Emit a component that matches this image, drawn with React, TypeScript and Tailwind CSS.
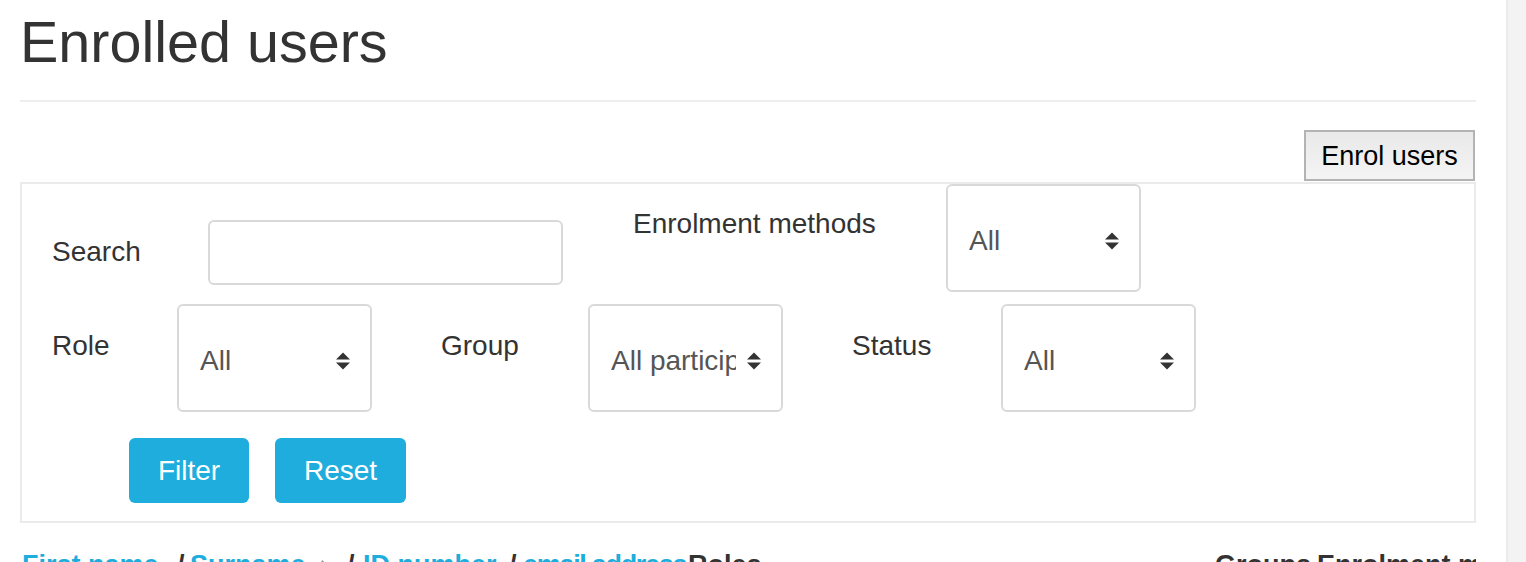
import React from 'react';

const SortArrows = () => (
  <svg width="16" height="18" viewBox="0 0 16 18" className="shrink-0">
    <polygon points="1,7.5 8,0.5 15,7.5" fill="#333" />
    <polygon points="1,10.5 15,10.5 8,17.5" fill="#333" />
  </svg>
);

function FakeSelect({ value, extra = '' }: { value: string; extra?: string }) {
  return (
    <div
      className={`${extra} w-[195px] h-[108px] shrink-0 flex items-center pt-[5px] pl-[21px] pr-[19px] border-2 border-[#d9d9d9] rounded-[6px] bg-white`}
    >
      <span className="flex-1 overflow-hidden whitespace-nowrap text-[28px] leading-[32px] text-[#555]">{value}</span>
      <span className="ml-[10px] flex items-center">
        <SortArrows />
      </span>
    </div>
  );
}

function Label({ children, cls }: { children: React.ReactNode; cls: string }) {
  return (
    <label className={`${cls} shrink-0 text-[28px] leading-[32px] text-[#333] whitespace-nowrap`}>{children}</label>
  );
}

export default function App() {
  return (
    <div className="flex h-[562px] overflow-hidden bg-white font-['Liberation_Sans',Arial,sans-serif]">
      <div className="w-[1506px] shrink-0 pl-[20px] pr-[30px]">
        <h2 className="pt-[10px] text-[57.5px] leading-[64px] text-[#333]">Enrolled users</h2>
        <div className="mt-[26px] h-[2px] bg-[#eeeeee]" />

        <div className="mt-[28px] flex justify-end pr-[1px]">
          <button className="w-[171px] h-[51px] border-2 border-[#b3b3b3] bg-gradient-to-b from-[#e9e9e9] to-[#f4f4f4] text-[27px] leading-[32px] text-black">
            Enrol users
          </button>
        </div>

        <div className="mt-[1px] border-2 border-[#ebebeb] pl-[30px] pb-[18px]">
          <div className="flex items-start">
            <Label cls="mt-[52px] w-[156px]">Search</Label>
            <input
              type="text"
              className="mt-[36px] mr-[70px] w-[355px] h-[65px] shrink-0 border-2 border-[#d9d9d9] rounded-[6px] outline-none"
            />
            <Label cls="mt-[24px] w-[313px]">Enrolment methods</Label>
            <FakeSelect value="All" />
          </div>

          <div className="mt-[12px] flex items-start">
            <Label cls="mt-[26px] w-[125px]">Role</Label>
            <FakeSelect value="All" extra="mr-[69px]" />
            <Label cls="mt-[26px] w-[147px]">Group</Label>
            <FakeSelect value="All participants" extra="mr-[69px]" />
            <Label cls="mt-[26px] w-[149px]">Status</Label>
            <FakeSelect value="All" />
          </div>

          <div className="mt-[26px] ml-[77px] flex gap-[26px]">
            <button className="w-[120px] h-[65px] rounded-[6px] bg-[#1eaddc] text-white text-[28px] leading-[32px]">
              Filter
            </button>
            <button className="w-[131px] h-[65px] rounded-[6px] bg-[#1eaddc] text-white text-[28px] leading-[32px]">
              Reset
            </button>
          </div>
        </div>

        <div className="mt-[26px] flex items-baseline overflow-hidden whitespace-nowrap text-[27px] leading-[32px] font-bold">
          <span className="ml-[2px] w-[155px] shrink-0 text-[#1eaddc]">First name</span>
          <span className="w-[13px] shrink-0 text-[#333]">/</span>
          <span className="w-[127px] shrink-0 text-[#1eaddc]">Surname</span>
          <span className="w-[30px] shrink-0 flex items-start">
            <svg width="11" height="14" viewBox="0 0 11 14" className="self-center">
              <polygon points="0,7 5.5,0 11,7" fill="#999" />
            </svg>
          </span>
          <span className="w-[16px] shrink-0 text-[#333]">/</span>
          <span className="w-[146px] shrink-0 text-[#1eaddc]">ID number</span>
          <span className="w-[14px] shrink-0 text-[#333]">/</span>
          <span className="w-[165px] shrink-0 tracking-[-1.3px] text-[#1eaddc]">email address</span>
          <span className="w-[527px] shrink-0 text-[#333]">Roles</span>
          <span className="w-[102px] shrink-0 text-[#333]">Groups</span>
          <span className="shrink-0 text-[#333]">Enrolment methods</span>
        </div>
      </div>
      <div className="flex-1 bg-[#f3f3f3] border-l-2 border-[#ebebeb]" />
    </div>
  );
}
